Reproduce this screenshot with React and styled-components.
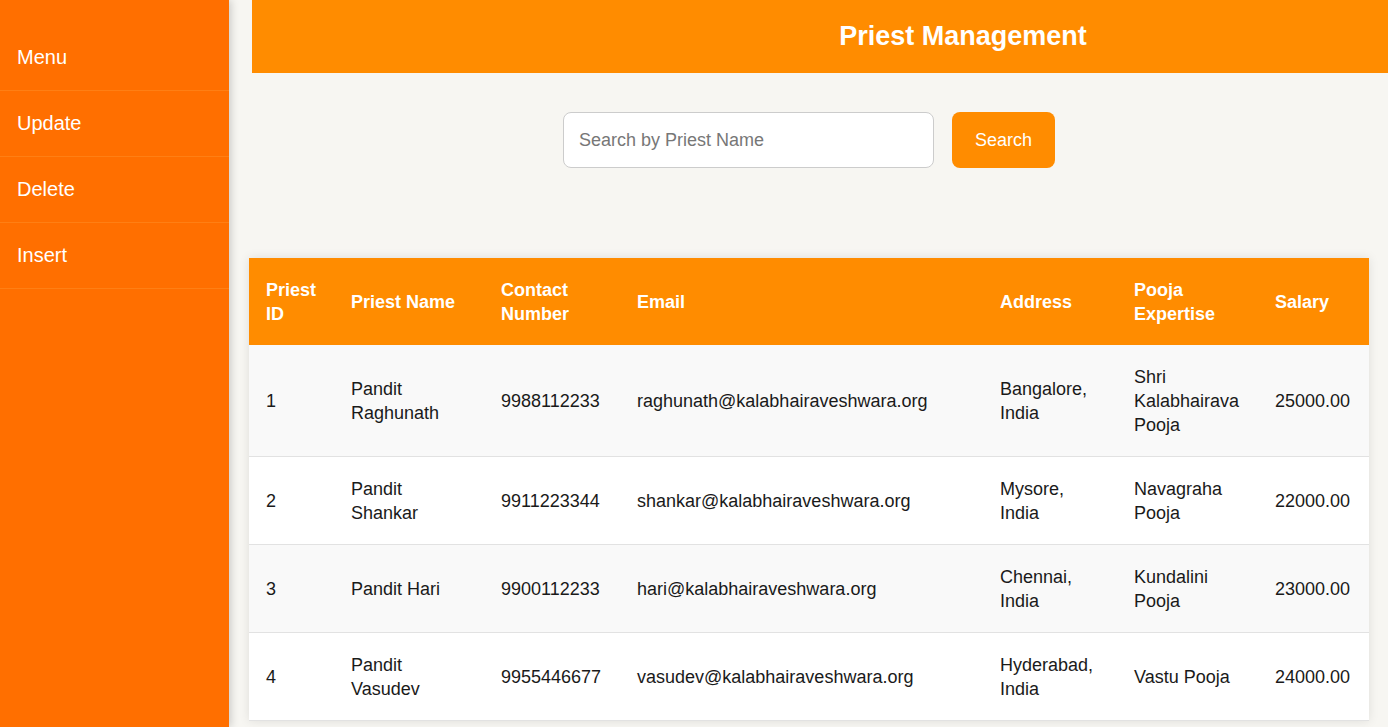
import React from "react";
import styled, { createGlobalStyle } from "styled-components";

const GlobalStyle = createGlobalStyle`
  html, body {
    margin: 0;
    padding: 0;
    overflow: hidden;
    background: #f7f6f2;
    font-family: "Liberation Sans", Arial, sans-serif;
  }
  * {
    box-sizing: border-box;
  }
`;

const priests = [
  {
    id: 1,
    name: "Pandit Raghunath",
    contact: "9988112233",
    email: "raghunath@kalabhairaveshwara.org",
    address: "Bangalore, India",
    expertise: "Shri Kalabhairava Pooja",
    salary: "25000.00",
  },
  {
    id: 2,
    name: "Pandit Shankar",
    contact: "9911223344",
    email: "shankar@kalabhairaveshwara.org",
    address: "Mysore, India",
    expertise: "Navagraha Pooja",
    salary: "22000.00",
  },
  {
    id: 3,
    name: "Pandit Hari",
    contact: "9900112233",
    email: "hari@kalabhairaveshwara.org",
    address: "Chennai, India",
    expertise: "Kundalini Pooja",
    salary: "23000.00",
  },
  {
    id: 4,
    name: "Pandit Vasudev",
    contact: "9955446677",
    email: "vasudev@kalabhairaveshwara.org",
    address: "Hyderabad, India",
    expertise: "Vastu Pooja",
    salary: "24000.00",
  },
];

const columns = [
  { label: "Priest ID", width: 85 },
  { label: "Priest Name", width: 150 },
  { label: "Contact Number", width: 136 },
  { label: "Email", width: 363 },
  { label: "Address", width: 134 },
  { label: "Pooja Expertise", width: 141 },
  { label: "Salary", width: 111 },
];

const menuItems = ["Menu", "Update", "Delete", "Insert"];

const App = () => {
  return (
    <>
      <GlobalStyle />
      <Layout>
        <Sidebar>
          <NavList>
            {menuItems.map((item) => (
              <NavItem key={item}>{item}</NavItem>
            ))}
          </NavList>
        </Sidebar>

        <Main>
          <Header>
            <Title>Priest Management</Title>
          </Header>

          <SearchBar>
            <SearchInput type="text" placeholder="Search by Priest Name" />
            <SearchButton>Search</SearchButton>
          </SearchBar>

          <Table>
            <colgroup>
              {columns.map((c) => (
                <col key={c.label} style={{ width: c.width }} />
              ))}
            </colgroup>
            <thead>
              <tr>
                {columns.map((c) => (
                  <Th key={c.label}>{c.label}</Th>
                ))}
              </tr>
            </thead>
            <tbody>
              {priests.map((p) => (
                <Row key={p.id}>
                  <Td>{p.id}</Td>
                  <Td>{p.name}</Td>
                  <Td>{p.contact}</Td>
                  <Td>{p.email}</Td>
                  <Td>{p.address}</Td>
                  <Td>{p.expertise}</Td>
                  <Td>{p.salary}</Td>
                </Row>
              ))}
            </tbody>
          </Table>
        </Main>
      </Layout>
    </>
  );
};

export default App;

const Layout = styled.div`
  display: flex;
  min-height: 100vh;
`;

const Sidebar = styled.aside`
  width: 229px;
  flex-shrink: 0;
  background: #ff6f00;
  box-shadow: 2px 0 8px rgba(0, 0, 0, 0.18);
  padding-top: 25px;
  position: relative;
  z-index: 2;
`;

const NavList = styled.ul`
  list-style: none;
  margin: 0;
  padding: 0;
`;

const NavItem = styled.li`
  height: 66px;
  display: flex;
  align-items: center;
  padding-left: 17px;
  color: #ffffff;
  font-size: 20px;
  border-bottom: 1px solid #ff7f14;
  cursor: pointer;
`;

const Main = styled.main`
  flex: 1;
  min-width: 0;
  padding: 0 19px 0 20px;
  overflow: hidden;
`;

const Header = styled.header`
  height: 73px;
  margin-left: 3px;
  margin-right: -305px;
  background: #ff8c00;
  display: flex;
  align-items: center;
  justify-content: center;
`;

const Title = styled.h1`
  margin: 0;
  color: #ffffff;
  font-size: 27px;
  font-weight: 700;
`;

const SearchBar = styled.div`
  display: flex;
  justify-content: center;
  gap: 18px;
  margin-top: 39px;
`;

const SearchInput = styled.input`
  width: 371px;
  height: 56px;
  padding: 0 15px;
  border: 1px solid #cccccc;
  border-radius: 8px;
  background: #ffffff;
  font-family: inherit;
  font-size: 18px;
  color: #333;
  outline: none;

  &::placeholder {
    color: #777777;
  }
`;

const SearchButton = styled.button`
  height: 56px;
  padding: 0 23px;
  border: none;
  border-radius: 8px;
  background: #ff8c00;
  color: #ffffff;
  font-family: inherit;
  font-size: 18px;
  cursor: pointer;
`;

const Table = styled.table`
  width: 1120px;
  margin-top: 90px;
  border-collapse: collapse;
  table-layout: fixed;
  background: #ffffff;
  box-shadow: 0 0 10px rgba(0, 0, 0, 0.1);
`;

const Th = styled.th`
  background: #ff8c00;
  color: #ffffff;
  font-size: 18px;
  font-weight: 700;
  line-height: 24px;
  text-align: left;
  padding: 19.5px 17px;
  vertical-align: middle;
`;

const Row = styled.tr`
  background: #ffffff;
  border-bottom: 1px solid #e2e2e2;

  &:nth-child(odd) {
    background: #f9f9f9;
  }
`;

const Td = styled.td`
  font-size: 18px;
  line-height: 24px;
  color: #1a1a1a;
  padding: 19.5px 17px;
  vertical-align: middle;
`;
